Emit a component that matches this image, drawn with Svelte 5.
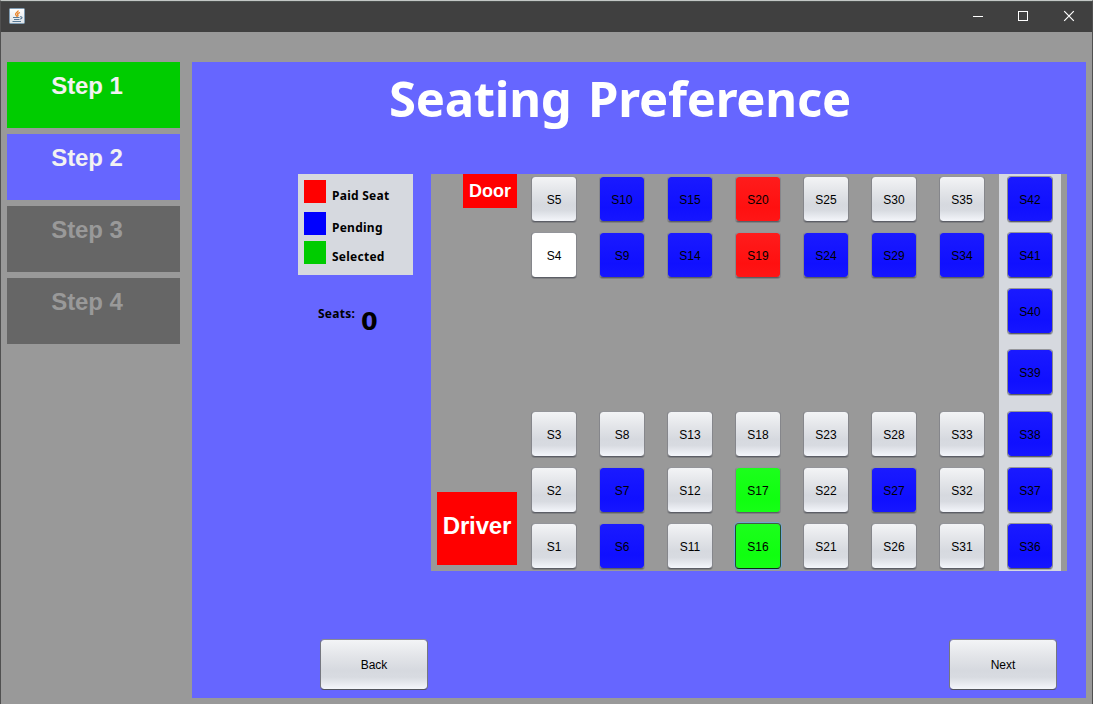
<script>
  const steps = [
    { label: 'Step 1', state: 'done' },
    { label: 'Step 2', state: 'current' },
    { label: 'Step 3', state: 'off' },
    { label: 'Step 4', state: 'off' }
  ];
  const legend = [
    { label: 'Paid Seat', kind: 'red' },
    { label: 'Pending', kind: 'blue' },
    { label: 'Selected', kind: 'lime' }
  ];
  const status = { 20: 'paid', 19: 'paid', 17: 'selected', 16: 'selected focus', 4: 'white' };
  for (const n of [6, 7, 9, 10, 14, 15, 24, 27, 29, 34, 36, 37, 38, 39, 40, 41, 42]) status[n] = 'pending';
  const columns = [0, 1, 2, 3, 4, 5, 6].map((c) => [5, 4, 3, 2, 1].map((r) => c * 5 + r));
  const rear = [42, 41, 40, 39, 38, 37, 36];
</script>

<div class="window">
  <header>
    <svg class="java" width="16" height="16" viewBox="0 0 16 16">
      <defs>
        <linearGradient id="tile" x1="0" y1="0" x2="0" y2="1">
          <stop offset="0" stop-color="#fff" /><stop offset="1" stop-color="#dde3e8" />
        </linearGradient>
      </defs>
      <rect x=".5" y=".5" width="15" height="15" rx="1" fill="url(#tile)" stroke="#7f9cb3" />
      <path d="M9.3 2.5C9.3 4 6.2 4.8 6.6 6.4C6.8 7.2 7.6 7.6 7.8 8.6M11 4.6C9 5 8 5.8 8.8 6.7C9.3 7.3 9 7.9 8.4 8.4" fill="none" stroke="#e98225" stroke-width="1.3" />
      <path d="M4 9.5H10.5M5 11.5H10.5M3.5 13.5H12M11 8.8C13.8 8.3 13.6 10.6 11.2 11.1" fill="none" stroke="#587a96" stroke-width="1.1" />
    </svg>
    <div class="controls">
      <svg width="12" height="12" viewBox="0 0 12 12"><path d="M2 6.5H12" /></svg>
      <svg width="12" height="12" viewBox="0 0 12 12"><rect x="1.5" y="1.5" width="9" height="9" /></svg>
      <svg width="12" height="12" viewBox="0 0 12 12"><path stroke-width="1.2" d="M1.2 1.2L10.8 10.8M10.8 1.2L1.2 10.8" /></svg>
    </div>
  </header>
  <main>
    <nav>
      {#each steps as s}<div class="step {s.state}">{s.label}</div>{/each}
    </nav>
    <section>
      <h1>Seating Preference</h1>
      <div class="middle">
        <aside>
          <div class="legend">
            {#each legend as l}
              <div class="entry {l.kind}"><i></i><span>{l.label}</span></div>
            {/each}
          </div>
          <div class="count"><span>Seats:</span><b>0</b></div>
        </aside>
        <div class="bus">
          <div class="front">
            <div class="door">Door</div>
            <div class="driver">Driver</div>
          </div>
          <div class="rows">
            {#each columns as col}
              <div class="col">
                {#each col as n}<button class="seat {status[n] ?? ''}">S{n}</button>{/each}
              </div>
            {/each}
          </div>
          <div class="rear">
            {#each rear as n}<button class="seat {status[n] ?? ''}">S{n}</button>{/each}
          </div>
        </div>
      </div>
      <footer>
        <button>Back</button>
        <button>Next</button>
      </footer>
    </section>
  </main>
</div>

<style>
  :global(body) { margin: 0; }
  .window {
    box-sizing: border-box; width: 1093px; height: 704px; overflow: hidden;
    background: #999; border: 1px solid #505050; border-top-color: #c3c7c5; border-bottom: 0;
    font-family: "Liberation Sans", Arial, sans-serif;
  }
  header {
    box-sizing: border-box; height: 31px; background: #404040; border-top: 1px solid #4b504e;
    display: flex; justify-content: space-between; align-items: flex-start; padding: 6px 17px 0 8px;
  }
  .java { display: block; }
  .controls { display: flex; gap: 34px; padding-top: 2px; }
  .controls svg { display: block; fill: none; stroke: #fff; }
  main { display: flex; gap: 12px; padding: 30px 0 0 6px; }
  nav { width: 173px; display: flex; flex-direction: column; gap: 6px; }
  .step {
    box-sizing: border-box; height: 66px; padding: 10px 13px 0 0; text-align: center;
    font-size: 24px; line-height: 28px; font-weight: bold; color: #f2f2f2; letter-spacing: -0.1px;
  }
  .done { background: #0c0; }
  .current { background: #66f; }
  .off { background: #666; color: #999; }
  section { width: 894px; height: 636px; background: #66f; display: flex; flex-direction: column; }
  h1 {
    margin: 0; height: 112px; box-sizing: border-box; padding: 7px 0 0 197px; color: #fff; white-space: nowrap;
    font: bold 49px/58px "Noto Sans", sans-serif; letter-spacing: -0.25px; word-spacing: 4px;
  }
  .middle { display: flex; gap: 18px; padding-left: 106px; height: 397px; }
  aside { width: 115px; font: bold 12px/16px "Noto Sans", sans-serif; color: #000; letter-spacing: 0.25px; }
  .legend { box-sizing: border-box; height: 101px; background: #d6d9df; padding: 6px; }
  .entry { display: flex; gap: 6px; height: 32px; }
  .entry.blue { height: 29px; }
  .entry i { width: 22px; height: 23px; }
  .entry span { padding-top: 8px; }
  .red i { background: #f00; }
  .blue i { background: #00f; }
  .lime i { background: #0c0; }
  .count { display: flex; gap: 6px; padding: 31px 0 0 20px; }
  .count b { font: bold 24px/30px "DejaVu Sans", sans-serif; padding-top: 1px; }
  .bus { display: flex; width: 636px; height: 397px; background: #999; }
  .front {
    box-sizing: border-box; width: 100px; padding: 0 14px 6px 6px; color: #fff; font-weight: bold;
    display: flex; flex-direction: column; justify-content: space-between; align-items: flex-end;
  }
  .door { width: 54px; height: 34px; line-height: 34px; background: #f00; font-size: 18px; text-align: center; }
  .driver { width: 80px; height: 73px; line-height: 67px; background: #f00; font-size: 24px; text-align: center; letter-spacing: -0.15px; }
  .rows { display: flex; gap: 22px; padding-top: 2px; }
  .col, .rear { display: flex; flex-direction: column; gap: 10px; }
  .col .seat:nth-child(3) { margin-top: 123px; }
  .rear { box-sizing: border-box; width: 62px; margin-left: 14px; padding: 2px 8px 0; background: #d6d9df; }
  .rear .seat:nth-child(4) { margin-top: 5px; }
  .rear .seat:nth-child(5) { margin-top: 6px; }
  button {
    box-sizing: border-box; padding: 0; color: #000; font: 12px/16px "Liberation Sans", Arial, sans-serif;
    border: 1px solid; border-color: #8a8c92 #75777f #52555d; border-radius: 4px;
    background: linear-gradient(#f3f4f6, #e2e4e8 35%, #d6d9df 62%, #d8dbe1 76%, #f4f6fb) padding-box;
  }
  .seat { width: 46px; height: 46px; flex: none; padding: 2px 0 0; border-color: #94959a #85868b #5c5e66; box-shadow: 0 1px 0 rgba(70, 72, 80, 0.3); }
  .seat.pending { background: linear-gradient(#1a1aff, #1010ff 70%, #1616ff) padding-box; color: #000; }
  .seat.paid { background: linear-gradient(#ff1c1c, #ff1010 70%, #ff1616) padding-box; }
  .seat.selected { background: linear-gradient(#1cff1c, #10ff10 70%, #16ff16) padding-box; }
  .seat.white { background: #fff padding-box; }
  .seat.focus { border-color: #406040 #205030 #102818; box-shadow: 0 0 0 1px #73a4d1; }
  footer { display: flex; justify-content: space-between; padding: 68px 29px 0 128px; }
  footer button { width: 108px; height: 51px; }
</style>
